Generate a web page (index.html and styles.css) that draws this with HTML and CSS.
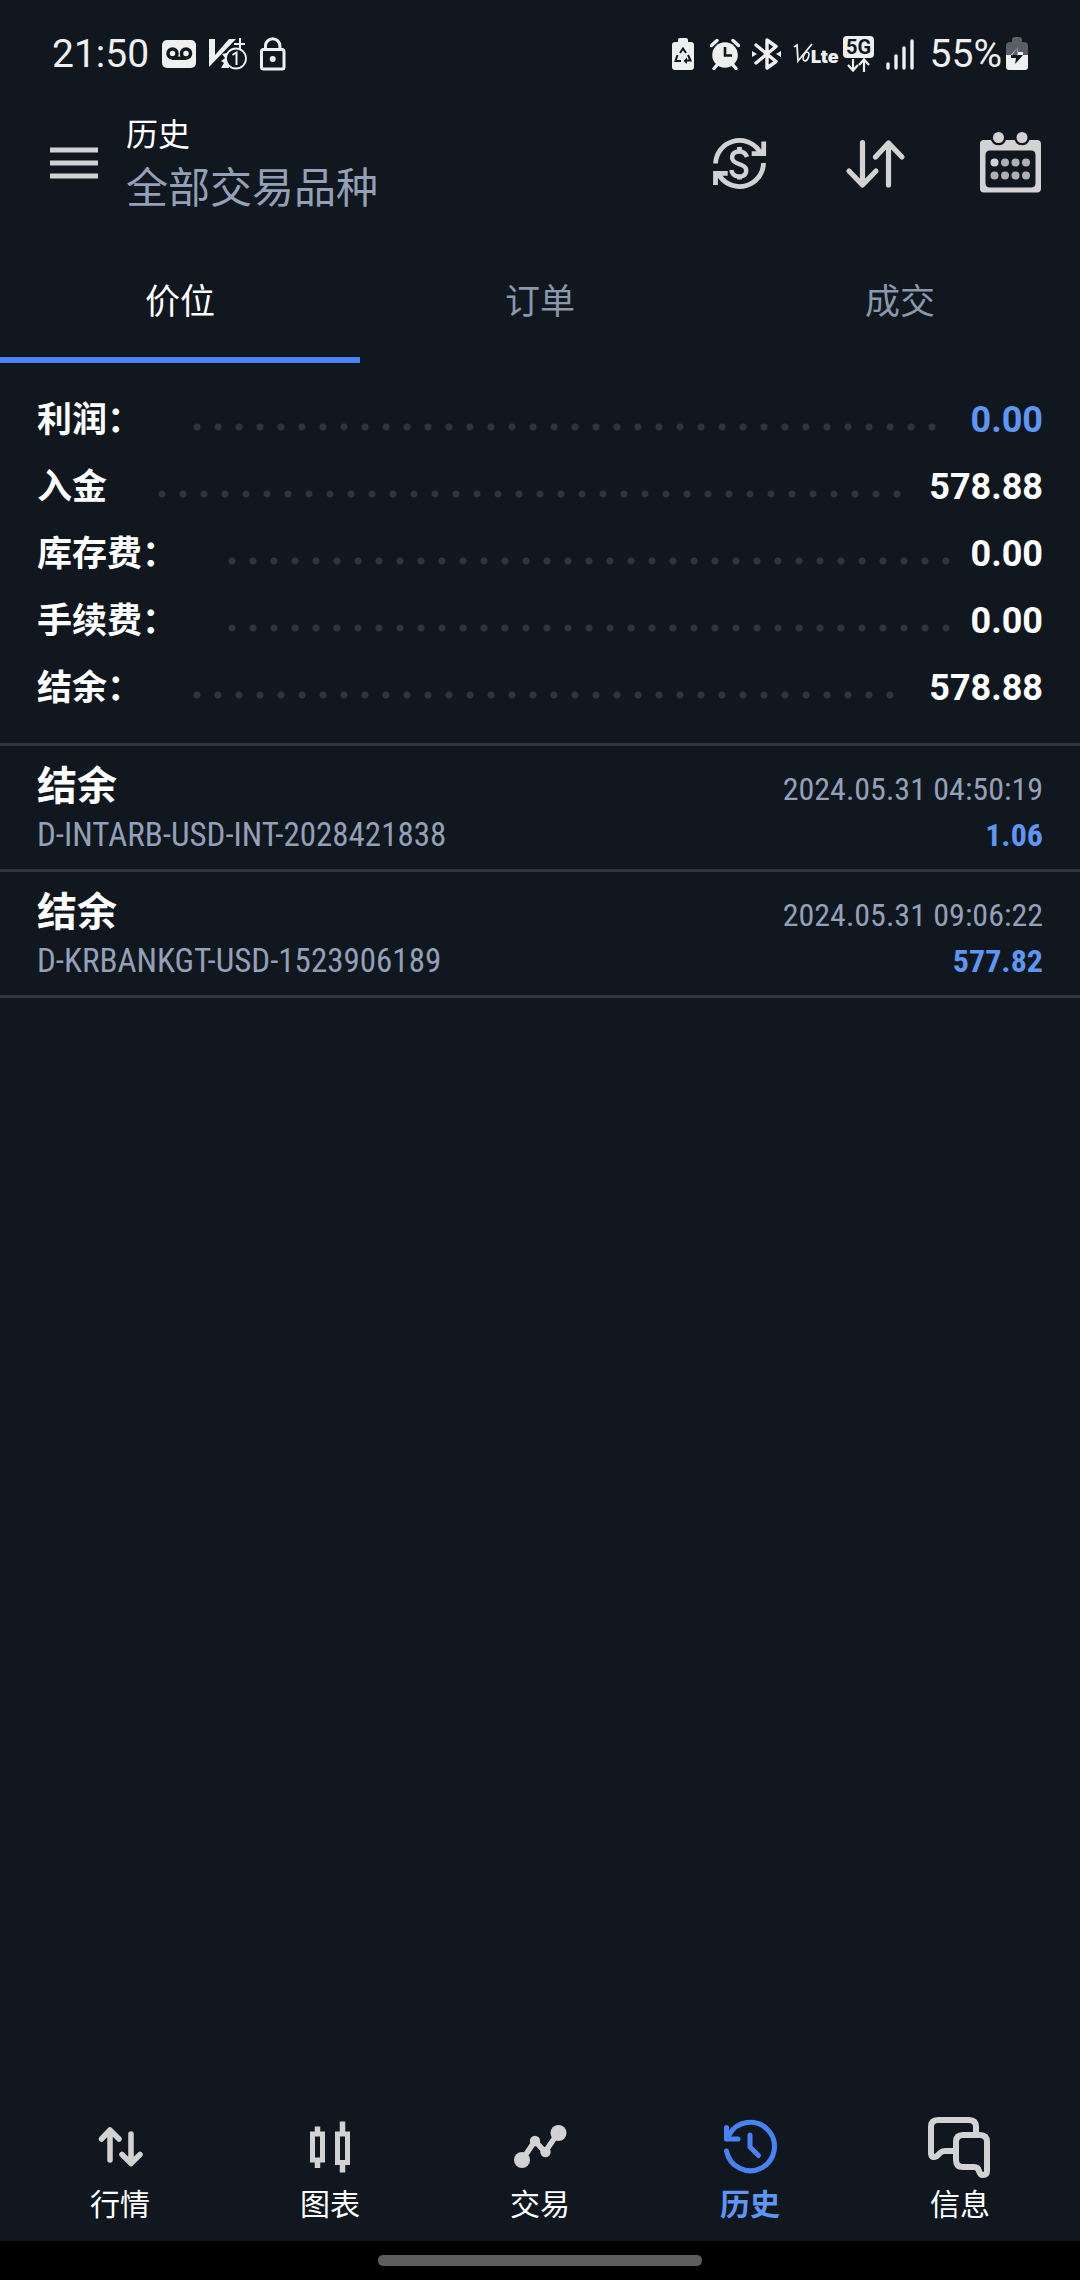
FILE: index.html
```html
<!DOCTYPE html>
<html lang="zh-CN">
<head>
<meta charset="utf-8">
<meta name="viewport" content="width=device-width, initial-scale=1">
<title>历史</title>
<link rel="stylesheet" href="styles.css">
</head>
<body>
<div class="status">
  <div class="status-left">
    <span class="clock">21:50</span>
    <svg width="34" height="28" viewBox="0 0 34 28" aria-hidden="true"><rect width="34" height="28" rx="5" fill="#eef0f0"/><circle cx="10.500" cy="13.500" r="4.500" fill="none" stroke="#10171e" stroke-width="3.500"/><circle cx="24" cy="13.500" r="4.500" fill="none" stroke="#10171e" stroke-width="3.500"/><path d="M10 18.200h14" stroke="#10171e" stroke-width="3.500"/></svg>
    <svg width="38" height="32" viewBox="0 0 38 32" aria-hidden="true"><path d="M0 1h6v16L20 1h7L0 29z" fill="#eef0f0"/><path d="M31 0v12M25 6h11" stroke="#eef0f0" stroke-width="2"/><path d="M18 15l-5 1 3 4-4 3 3 2-3 5h8z" fill="#eef0f0"/><circle cx="27" cy="20.500" r="10" fill="#10171e" stroke="#eef0f0" stroke-width="1.800"/><path d="M23.500 17l4-2.500V27" fill="none" stroke="#eef0f0" stroke-width="2"/></svg>
    <svg width="26" height="34" viewBox="0 0 26 34" aria-hidden="true"><rect x="1.500" y="12.500" width="22.500" height="19.500" rx="2" fill="none" stroke="#eef0f0" stroke-width="3"/><path d="M5.500 12V9a7.200 7.200 0 0 1 14.400 0v3" fill="none" stroke="#eef0f0" stroke-width="3"/><circle cx="12.700" cy="22" r="3" fill="#eef0f0"/></svg>
  </div>
  <div class="status-right">
    <svg class="saver" width="22" height="33" viewBox="0 0 22 33" aria-hidden="true"><path d="M6 4V2q0-2 2-2h6q2 0 2 2v2h3q3 0 3 3v22q0 3-3 3H3q-3 0-3-3V7q0-3 3-3z" fill="#eef0f0"/><path d="M8 15l3-4.500 3 4.500M16 17l2.500 5.500h-5M5.500 17L3.500 23H9" fill="none" stroke="#10171e" stroke-width="2"/><path d="M15 19.500L11.500 23l3.500 3z" fill="#10171e"/></svg>
    <svg width="30" height="31" viewBox="0 0 30 31" aria-hidden="true"><circle cx="15" cy="16" r="12.800" fill="#eef0f0"/><path d="M1.500 6.500L7 1.500M28.500 6.500L23 1.500M7 26l-3 3.500M23 26l3 3.500" stroke="#eef0f0" stroke-width="3.400" stroke-linecap="round"/><path d="M15 8v8.500h7" fill="none" stroke="#10171e" stroke-width="2.600"/></svg>
    <svg width="29" height="34" viewBox="0 0 29 34" aria-hidden="true"><path d="M4 8l20 16.500L15 31V3l9 6.500L4 26" fill="none" stroke="#eef0f0" stroke-width="3.400" stroke-linejoin="round" stroke-linecap="round"/><path d="M0 14l5 3-5 3zM29 14l-5 3 5 3z" fill="#eef0f0"/></svg>
    <svg class="volte" width="46" height="22" viewBox="0 0 46 22" aria-hidden="true"><path d="M1 4l3-2 1 16L19 1" fill="none" stroke="#eef0f0" stroke-width="1.800"/><ellipse cx="13" cy="13.500" rx="2.500" ry="4.500" transform="rotate(20 13 13.500)" fill="none" stroke="#eef0f0" stroke-width="1.600"/><text class="lte" x="18" y="20">Lte</text></svg>
    <svg width="31" height="37" viewBox="0 0 31 37" aria-hidden="true"><rect width="31" height="22" rx="4" fill="#eef0f0"/><text class="five-g" x="15.500" y="18" text-anchor="middle">5G</text><path d="M10 23v11M5 29l5 5.500 5-5.500M21 36V24M16 29l5-5.500 5 5.500" fill="none" stroke="#eef0f0" stroke-width="2.200"/></svg>
    <svg class="signal" width="28" height="31" viewBox="0 0 28 31" aria-hidden="true"><path d="M2 25v4M10 17v12M18 9v20M26 2v27" stroke="#eef0f0" stroke-width="3.400" stroke-linecap="round"/></svg>
    <span class="percent">55%</span>
    <svg class="battery" width="22" height="34" viewBox="0 0 22 34" aria-hidden="true"><path d="M6 5V3q0-3 3-3h4q3 0 3 3v2h2q4 0 4 4v9H0V9q0-4 4-4z" fill="#5b5f65"/><path d="M0 18h22v12q0 3-3 3H3q-3 0-3-3z" fill="#eef0f0"/><path d="M11 18h6L9 27l1-6H5v-3z" fill="#10171e"/><path d="M12 10l-7 8h6l.500 1zM12 10l-1 5h6v3H6z" fill="#eef0f0"/></svg>
  </div>
</div>

<header class="header">
  <button class="icon-btn menu" aria-label="菜单"><svg width="48" height="33" viewBox="0 0 48 33"><path d="M0 3h48M0 16h48M0 29h48" stroke="#d2d2d2" stroke-width="5"/></svg></button>
  <div class="titles">
    <h1 class="title">历史</h1>
    <p class="subtitle">全部交易品种</p>
  </div>
  <div class="actions">
    <button class="icon-btn" aria-label="货币"><svg width="62" height="62" viewBox="0 0 62 62"><g fill="none" stroke="#d2d2d2" stroke-width="4.800"><path d="M5.500 31.500A24 24 0 0 1 49 18.500l4 4"/><path d="M53.500 31A24 24 0 0 1 10 44.500l-4-4"/><path d="M53.700 9.500v12.200H41.700M5.500 53V41.300h12.200"/><path d="M29.500 15v4M29.500 43.500v4"/><path d="M37 25q-2-5.500-7.500-5.500c-9 0-9.500 9-3 11.500l5 2c7.500 3 5.500 11.500-2 11.500-6 0-8-4-8-6.500" stroke-width="4.500"/></g></svg></button>
    <button class="icon-btn" aria-label="排序"><svg width="62" height="62" viewBox="0 0 62 62"><path d="M17.500 10.500v42M4 39l13.500 14L31 39M43.500 53V11M30.500 25l13-14 13.500 14" fill="none" stroke="#d2d2d2" stroke-width="5.200" stroke-linecap="round" stroke-linejoin="round"/></svg></button>
    <button class="icon-btn" aria-label="日期"><svg width="62" height="62" viewBox="0 0 62 62"><path fill-rule="evenodd" d="M4 8h7a8 8 0 0 0 15 0h8.500a8 8 0 0 0 15 0H57q4 0 4 4v44.500q0 4-4 4H4q-4 0-4-4V12q0-4 4-4zM10 18.500q-4.500 0-4.500 4.500v28q0 4.500 4.500 4.500h41q4.500 0 4.500-4.500V23q0-4.500-4.500-4.500z" fill="#d2d2d2"/><circle cx="18.500" cy="5.500" r="5.500" fill="#d2d2d2"/><circle cx="42" cy="5.500" r="5.500" fill="#d2d2d2"/><circle cx="14.500" cy="30.500" r="4" fill="#d2d2d2"/><g fill="#adafb1"><circle cx="25" cy="30.500" r="4"/><circle cx="35.500" cy="30.500" r="4"/><circle cx="46" cy="30.500" r="4"/><circle cx="14.500" cy="43.500" r="4"/><circle cx="25" cy="43.500" r="4"/><circle cx="35.500" cy="43.500" r="4"/><circle cx="46" cy="43.500" r="4"/></g></svg></button>
  </div>
</header>

<div class="tabs" role="tablist">
  <button class="tab tab-active" role="tab" aria-selected="true">价位</button>
  <button class="tab" role="tab" aria-selected="false">订单</button>
  <button class="tab" role="tab" aria-selected="false">成交</button>
</div>

<main class="content">
  <dl class="summary">
    <div class="sum-row"><dt>利润：</dt><dd><span class="value profit">0.00</span></dd></div>
    <div class="sum-row"><dt>入金</dt><dd><span class="value">578.88</span></dd></div>
    <div class="sum-row"><dt>库存费：</dt><dd><span class="value">0.00</span></dd></div>
    <div class="sum-row"><dt>手续费：</dt><dd><span class="value">0.00</span></dd></div>
    <div class="sum-row"><dt>结余：</dt><dd><span class="value">578.88</span></dd></div>
  </dl>
  <ul class="deals">
    <li class="deal">
      <span class="deal-type">结余</span><time class="deal-time">2024.05.31 04:50:19</time>
      <span class="deal-note">D-INTARB-USD-INT-2028421838</span><span class="deal-sum">1.06</span>
    </li>
    <li class="deal">
      <span class="deal-type">结余</span><time class="deal-time">2024.05.31 09:06:22</time>
      <span class="deal-note">D-KRBANKGT-USD-1523906189</span><span class="deal-sum">577.82</span>
    </li>
  </ul>
</main>

<nav class="nav">
  <a class="nav-item" href="#quotes"><svg width="64" height="64" viewBox="0 0 64 64"><path d="M22 45V16M13.500 24l8.500-9 9 9M43 19v29M34 39.500l9 9 9-9" fill="none" stroke="#d2d2d2" stroke-width="5.500" stroke-linecap="round" stroke-linejoin="round"/></svg>行情</a>
  <a class="nav-item" href="#charts"><svg width="64" height="64" viewBox="0 0 64 64"><path d="M14.500 19h10v26h-10zM39.500 19h10v28.500h-10z" fill="none" stroke="#d2d2d2" stroke-width="5"/><path d="M19.500 11.500v6M19.500 46v7M44.500 6.500v11M44.500 48v9.500" stroke="#d2d2d2" stroke-width="5.500"/></svg>图表</a>
  <a class="nav-item" href="#trade"><svg width="64" height="64" viewBox="0 0 64 64"><path d="M14 45l13-19 10 11 13-19" fill="none" stroke="#d2d2d2" stroke-width="5.500"/><g fill="#d2d2d2"><circle cx="14" cy="45" r="8"/><circle cx="27" cy="26" r="5.200"/><circle cx="37.500" cy="37" r="5.200"/><circle cx="50.500" cy="18" r="8"/></g></svg>交易</a>
  <a class="nav-item nav-active" href="#history" aria-current="page"><svg width="64" height="64" viewBox="0 0 64 64"><g fill="none" stroke="#4882f4" stroke-width="5" stroke-linecap="round" stroke-linejoin="round"><path d="M8.500 36A24.200 24.200 0 1 0 11 20l-2.500 3.500"/><path d="M8.500 12.500v11.500H20"/><path d="M32 20v12l8.500 8.500"/></g></svg>历史</a>
  <a class="nav-item" href="#messages"><svg width="64" height="64" viewBox="0 0 64 64"><g fill="none" stroke="#d2d2d2" stroke-width="6" stroke-linejoin="round"><path d="M48 18.500V12q0-7-7-7H10Q3 5 3 12v26q0 6 6 3l3-3q2-2 5-2h11"/><path d="M35 20h17q7 0 7 7v29q0 4-4 4-3 0-4-4-1-4-5-4H35q-7 0-7-7V27q0-7 7-7z"/></g></svg>信息</a>
</nav>
<div class="gesture"><span class="handle"></span></div>
</body>
</html>
```
FILE: styles.css
```css
* { box-sizing: border-box; }

body {
  margin: 0;
  min-height: 100vh;
  display: flex;
  flex-direction: column;
  background: #10171e;
  color: #fff;
  font-family: Roboto, "Noto Sans CJK SC", sans-serif;
}

h1, p, dl, dd, ul { margin: 0; padding: 0; }

button {
  padding: 0;
  border: 0;
  background: none;
  color: inherit;
  font: inherit;
  cursor: pointer;
}

svg { display: block; flex: none; }

.status {
  display: flex;
  justify-content: space-between;
  align-items: center;
  height: 108px;
  padding: 0 52px;
  color: #eef0f0;
  font-size: 39px;
}
.status-left { display: flex; align-items: center; gap: 13px; }
.status-right { display: flex; align-items: center; gap: 12px; }
.saver { margin-right: 4px; }
.volte { margin-right: -8px; overflow: visible; }
.signal { margin-right: 4px; }
.battery { margin-left: -8px; }
.lte { font: 900 18px Inter, sans-serif; fill: #eef0f0; }
.five-g { font: 700 20px Roboto, sans-serif; fill: #10171e; }

.header {
  display: flex;
  align-items: center;
  height: 110px;
  padding: 0 38px 0 50px;
}
.icon-btn { display: block; }
.titles { margin-left: 28px; padding-top: 8px; }
.title { font-size: 32px; font-weight: 400; line-height: 44px; }
.subtitle { font-size: 42px; line-height: 64px; color: #93a0b7; }
.actions { display: flex; gap: 73px; margin-left: auto; }

.tabs {
  display: grid;
  grid-template-columns: repeat(3, 1fr);
  margin-top: 27px;
}
.tab {
  height: 118px;
  padding-bottom: 6px;
  border-bottom: 6px solid transparent;
  font-size: 35px;
  color: #8a97ad;
}
.tab-active { color: #fff; border-color: #4882f4; }

.content { flex: 1; }

.summary { padding: 24px 37px 21px; }
.sum-row { display: flex; line-height: 67px; font-weight: 700; }
.sum-row dt { font-size: 35px; }
.sum-row dd {
  display: grid;
  flex: 1;
  grid-template-columns: 1fr auto;
  column-gap: 10px;
  align-items: center;
  margin-left: 44px;
  font-size: 36px;
}
/* dotted leader: its length is always a whole number of 21px dots */
.sum-row dd::before {
  content: "";
  width: round(down, 100%, 21px);
  height: 8px;
  margin-top: 12px;
  background: radial-gradient(circle at 11px 4px, #2e3442 3px, transparent 4px) 0 0 / 21px 8px repeat-x;
}
.profit { color: #5e96f4; }

.deals { list-style: none; border-top: 3px solid #2e3442; }
.deal {
  display: grid;
  grid-template-columns: 1fr auto;
  align-items: baseline;
  padding: 16px 37px 11px;
  border-bottom: 3px solid #2e3442;
  font-family: "Roboto Condensed", Roboto, "Noto Sans CJK SC", sans-serif;
  font-size: 32px;
  line-height: 45px;
  color: #93a0b7;
}
.deal-type { font-size: 40px; font-weight: 700; line-height: 50px; color: #fff; }
.deal-note { font-size: 33px; }
.deal-time { text-align: right; }
.deal-sum { text-align: right; font-weight: 700; color: #5e96f4; }

.nav {
  display: grid;
  grid-template-columns: repeat(5, 1fr);
  padding: 0 15px 14px;
}
.nav-item {
  display: flex;
  flex-direction: column;
  align-items: center;
  gap: 4px;
  font-size: 30px;
  line-height: 44px;
  color: #fff;
  text-decoration: none;
}
.nav-active { font-weight: 700; color: #5e96f4; }

.gesture {
  display: flex;
  justify-content: center;
  align-items: center;
  height: 39px;
  background: #000;
}
.handle { width: 30%; height: 11px; border-radius: 5px; background: #5e5e5e; }
```
